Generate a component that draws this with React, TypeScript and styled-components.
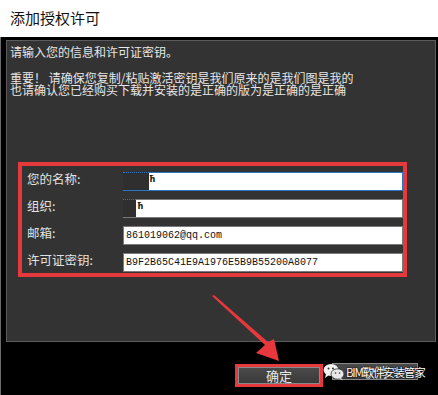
import React from "react";
import styled, { createGlobalStyle } from "styled-components";

const Global = createGlobalStyle`
  html, body { margin: 0; padding: 0; background: #000; }
  body { font-family: "Noto Sans CJK SC", "Noto Sans", sans-serif; }
`;

const Window = styled.div`
  position: relative;
  width: 438px;
  height: 395px;
  background: #000;
  overflow: hidden;
  display: flex;
  flex-direction: column;
  box-sizing: border-box;
`;

const TitleBar = styled.div`
  height: 37px;
  flex: none;
  background: #fff;
  color: #111;
  font-size: 15px;
  display: flex;
  align-items: center;
  padding-left: 10px;
  padding-bottom: 2px;
  box-sizing: border-box;
`;

const Body = styled.div`
  flex: 1;
  display: flex;
  flex-direction: column;
  border-left: 1px solid #6b6b6b;
  padding: 3px 2px 0 5px;
`;

const Panel = styled.div`
  height: 302px;
  box-sizing: border-box;
  background: #333333;
  border: 1px solid #5c5c5c;
  padding: 5px 0 0 3px;
  color: #e6e6e6;
  font-size: 12px;
  display: flex;
  flex-direction: column;
`;

const Line = styled.div<{ $mt?: number }>`
  line-height: 12px;
  height: 12px;
  white-space: nowrap;
  margin-top: ${(p) => p.$mt ?? 0}px;
`;

const RedBox = styled.div`
  margin: 66px 0 0 8px;
  width: 389px;
  box-sizing: border-box;
  border: 4px solid #e5393d;
  padding: 6px 1px 1px 5px;
  display: grid;
  grid-template-columns: 96px 280px;
  row-gap: 8px;
  align-items: start;
`;

const Label = styled.div`
  font-size: 12.5px;
  color: #e2e2e2;
  line-height: 13px;
`;

const Field = styled.div<{ $focus?: boolean }>`
  position: relative;
  height: 19px;
  box-sizing: border-box;
  background: #fff;
  border: 1px solid ${(p) => (p.$focus ? "#2a76c6" : "#7a7a7a")};
  font-family: "Liberation Mono", "DejaVu Sans Mono", monospace;
  font-size: 10px;
  color: #111;
  display: flex;
  align-items: center;
  padding-left: 2px;
`;

const Smudge = styled.div<{ $w: number; $h: number; $top: number }>`
  position: absolute;
  left: -1px;
  top: ${(p) => p.$top}px;
  width: ${(p) => p.$w}px;
  height: ${(p) => p.$h}px;
  background: #2f2f2f;
  border-top: 1px dotted #2a76c6;
  box-sizing: border-box;
`;

const Mark = styled.span<{ $left: number }>`
  position: absolute;
  left: ${(p) => p.$left}px;
  top: 2px;
  font-size: 8px;
  font-weight: bold;
  font-family: "DejaVu Sans", sans-serif;
  color: #111;
`;

const Footer = styled.div`
  flex: 1;
  display: flex;
  justify-content: flex-end;
  align-items: flex-start;
  padding: 22px 18px 0 0;
  gap: 9px;
`;

const RedFrame = styled.div`
  border: 3px solid #e5393d;
  padding: 0;
`;

const Button = styled.div<{ $w: number }>`
  width: ${(p) => p.$w}px;
  height: 17px;
  box-sizing: border-box;
  border: 1px solid #8a8a8a;
  background: linear-gradient(#4a4a4a, #3a3a3a);
  color: #e8e8e8;
  font-size: 13px;
  display: flex;
  align-items: center;
  justify-content: center;
`;

const CancelWrap = styled.div`
  position: relative;
  margin-top: -1px;
`;

const Watermark = styled.div`
  position: absolute;
  left: -9px;
  top: 0px;
  display: flex;
  align-items: center;
  gap: 1px;
  color: #fff;
  font-size: 11.5px;
  letter-spacing: -1.2px;
  white-space: nowrap;
  text-shadow: 0 0 2px #000, 0 0 1px #000;
`;

const ArrowSvg = styled.svg`
  position: absolute;
  left: 0;
  top: 0;
  pointer-events: none;
`;

export default function App() {
  return (
    <>
      <Global />
      <Window>
        <TitleBar>添加授权许可</TitleBar>
        <Body>
          <Panel>
            <Line>请输入您的信息和许可证密钥。</Line>
            <Line $mt={14}>重要！ 请确保您复制/粘贴激活密钥是我们原来的是我们图是我的</Line>
            <Line $mt={0}>也请确认您已经购买下载并安装的是正确的版为是正确的是正确</Line>
            <RedBox>
              <Label>您的名称:</Label>
              <Field $focus>
                <Smudge $w={26} $h={18} $top={-1} />
                <Mark $left={25}>ħ</Mark>
              </Field>
              <Label>组织:</Label>
              <Field>
                <Smudge $w={13} $h={18} $top={-1} />
                <Mark $left={13}>ħ</Mark>
              </Field>
              <Label>邮箱:</Label>
              <Field>861019062@qq.com</Field>
              <Label>许可证密钥:</Label>
              <Field>B9F2B65C41E9A1976E5B9B55200A8077</Field>
            </RedBox>
          </Panel>
          <Footer>
            <RedFrame>
              <Button $w={82}>确定</Button>
            </RedFrame>
            <CancelWrap>
              <Button $w={86}>取消</Button>
              <Watermark>
                <svg width="22" height="18" viewBox="0 0 22 18">
                  <ellipse cx="8" cy="7" rx="7.5" ry="6" fill="#f2f2f2" />
                  <path d="M3 11 L2 15 L6 12 Z" fill="#f2f2f2" />
                  <ellipse cx="14.5" cy="11" rx="6.5" ry="5.2" fill="#e8e8e8" stroke="#333" strokeWidth="0.8" />
                  <path d="M18 15 L20 17.5 L16 15.5 Z" fill="#e8e8e8" />
                  <circle cx="5.5" cy="5.5" r="1" fill="#333" />
                  <circle cx="10" cy="5.5" r="1" fill="#333" />
                  <circle cx="12.5" cy="10" r="0.8" fill="#333" />
                  <circle cx="16.5" cy="10" r="0.8" fill="#333" />
                </svg>
                <span>BIM软件安装管家</span>
              </Watermark>
            </CancelWrap>
          </Footer>
        </Body>
        <ArrowSvg width="438" height="395" viewBox="0 0 438 395">
          <polygon
            points="212,296 265,345 256,353 279,361 274,339 268,342 214,295"
            fill="#e8383d"
          />
        </ArrowSvg>
      </Window>
    </>
  );
}
